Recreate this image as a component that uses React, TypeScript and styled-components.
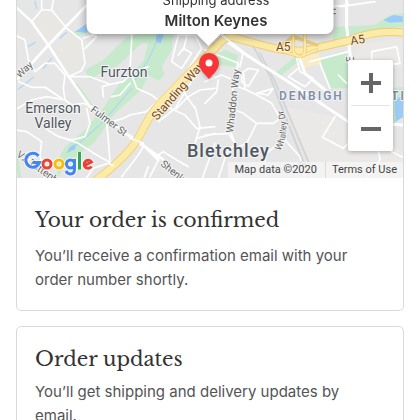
import React from "react";
import styled, { createGlobalStyle } from "styled-components";

const GlobalStyle = createGlobalStyle`
  *, *::before, *::after { box-sizing: border-box; }
  body {
    margin: 0;
    background: #fff;
    color: #545454;
    font-family: Inter, "Liberation Sans", sans-serif;
    font-size: 15px;
    line-height: 24px;
  }
`;

const Page = styled.main`
  display: flex;
  flex-direction: column;
  gap: 15px;
  height: 100vh;
  padding: 0 16px;
  overflow: hidden;
`;

const Card = styled.section<{ $continued?: boolean }>`
  flex: none;
  border: 1px solid #d9d9d9;
  border-width: ${(p) => (p.$continued ? "0 1px 1px" : "1px")};
  border-radius: ${(p) => (p.$continued ? "0 0 5px 5px" : "5px")};
  overflow: hidden;
`;

const CardBody = styled.div<{ $roomy?: boolean }>`
  display: flex;
  flex-direction: column;
  gap: ${(p) => (p.$roomy ? "8px" : "5px")};
  padding: ${(p) => (p.$roomy ? "26px 18px 18px" : "16px 18px 18px")};
`;

const Heading = styled.h2`
  margin: 0;
  color: #333;
  font: 400 20px/32px "Libre Baskerville", "Liberation Serif", serif;
`;

const Text = styled.p`
  margin: 0;
`;

const MapFrame = styled.div`
  position: relative;
  height: 178px;
  overflow: hidden;
  background: #e5e5e5;
  font-family: Roboto, sans-serif;
`;

const MapDrawing = styled.svg`
  display: block;
  width: 100%;
  height: 100%;
`;

const Popup = styled.div`
  position: absolute;
  bottom: 144px;
  left: 50%;
  width: 247px;
  padding: 8px 12px 2px 24px;
  transform: translateX(-50%);
  border-radius: 8px;
  background: #fff;
  color: #333;
  text-align: center;
  font-family: Inter, sans-serif;
  filter: drop-shadow(0 2px 4px rgba(0, 0, 0, 0.4));

  &::after {
    content: "";
    position: absolute;
    top: 100%;
    left: calc(50% - 14px);
    border: 12px solid transparent;
    border-top-color: #fff;
    border-bottom-width: 0;
  }
`;

const PopupLabel = styled.div`
  font-size: 13px;
  line-height: 20px;
`;

const PopupPlace = styled.div`
  font-size: 15px;
  font-weight: 600;
  line-height: 22px;
`;

const Pin = styled.svg`
  position: absolute;
  top: 49px;
  left: calc(50% - 16px);
  width: 32px;
  height: 36px;
`;

const ZoomControl = styled.div`
  position: absolute;
  top: 60px;
  right: 10px;
  display: flex;
  flex-direction: column;
  width: 45px;
  padding: 0 3px;
  border-radius: 2px;
  background: #fff;
  box-shadow: 0 1px 4px rgba(0, 0, 0, 0.3);
`;

const ZoomButton = styled.button`
  display: grid;
  place-items: center;
  height: 45px;
  padding: 0;
  border: 0;
  background: none;
  color: #666;
  cursor: pointer;

  & + & {
    height: 46px;
    border-top: 1px solid #e6e6e6;
  }
`;

const Attribution = styled.div`
  position: absolute;
  right: 0;
  bottom: 0;
  display: flex;
  background: rgba(245, 245, 245, 0.8);
  color: #444;
  font-size: 11px;
  line-height: 16px;
`;

const Notice = styled.span`
  padding: 0 8px 0 7px;
`;

const TermsLink = styled.a`
  padding: 0 6px;
  border-left: 1px solid #dcdcdc;
  color: inherit;
  text-decoration: none;
`;

const Logo = styled.a`
  position: absolute;
  bottom: 0;
  left: 6px;
  display: block;
  width: 74px;
  height: 30px;
`;

function StreetMap() {
  return (
    <MapDrawing viewBox="17 0 386 178" preserveAspectRatio="xMidYMid slice" role="img" aria-label="Map of Bletchley">
      <path fill="#e6e6e6" d="M17 0h386v178H17z" />
      {/* West side, drawn at three units to the pixel */}
      <g transform="translate(15 0) scale(.33333)" fill="none" strokeLinejoin="round" strokeLinecap="round">
        <path fill="#e9e7e4" d="M50 65 80 30H110L155 85 100 135Z M115 145 155 92 195 120 210 190 160 225Z" />
        <path fill="#c6eacb" d="M165 100 215 78V102L185 108ZM210 210 265 180 335 112 375 100H475L470 150 440 200 448 225 430 242 400 225 380 268 300 340 240 425 150 495 128 535 125 490 150 440 210 390 265 325 310 255 385 185 400 130 380 130 310 195 255 220 225 240Z" />
        <path stroke="#c6eacb" strokeWidth="10" d="M5 20 45 62M185 255 230 320M0 440 15 540" />
        <path fill="#9bccf9" d="M180 95 217 70V98ZM425 103H447L437 130 422 125ZM165 440 185 430 180 447 155 460Z" />
        <g stroke="#b6d6f0" strokeWidth="4">
          <path d="M40 140 60 127M10 268 55 232M85 205 110 175M135 115 155 97M60 5 65 25M350 265 260 370 180 440M425 125 400 180 360 240" />
        </g>
        <g stroke="#fff" strokeWidth="5">
          <path d="M0 105 30 120 40 180 60 215 90 190 120 190 150 225 145 265 150 300 170 315 205 310 232 320M0 240 50 262 92 262 140 295" />
          <path d="M50 65 80 30H110L155 85 200 120 210 190 198 213 160 230M115 0 110 30M80 0V30M205 115 235 105 245 110 210 145" />
          <path d="M160 230 225 230 285 253 325 245 350 220 370 210 400 200M350 0V120L345 210 365 265 410 285 435 305M265 290 262 260 285 253M290 290 315 285 345 250" />
          <path d="M140 295 90 262M0 330 50 300 95 290 150 300M95 388 130 410 170 420 210 410 225 370 215 325M120 405 190 430 245 465 290 490" />
          <path d="M5 390 35 395 80 425 75 465 90 540M75 465 40 480M285 485 280 420 275 370 325 355 345 345 395 335 430 300 515 215 560 145 540 105H490L470 185 500 205 530 160 505 145 490 165M515 110 505 150" />
          <path d="M430 365 450 350 480 325 545 220 560 205 600 230M435 300 465 325 510 345 545 385 600 380M480 330 520 290 555 270 600 265M540 320 555 380 540 430M505 275 540 325M545 415 600 400M365 425 385 440 370 465 320 530M420 470 445 455 485 480 520 500M430 480 405 530M560 540 600 430M385 540 400 500" />
        </g>
        <g stroke="#fff" strokeWidth="8">
          <path d="M0 18 50 65 100 135 160 228 225 320 365 423 440 475 505 540M220 10 100 135 0 245M315 390 380 430 430 480" />
        </g>
        <path stroke="#f2d077" strokeWidth="25" d="M230 550Q340 470 375 405 405 342 435 310L600 140" />
        <path stroke="#fceba7" strokeWidth="20" d="M230 550Q340 470 375 405 405 342 435 310L600 140" />
        <path stroke="#fff" strokeWidth="5" d="M210 540 235 505 280 490 295 497M345 415 385 430" />
      </g>
      {/* East side */}
      <g transform="translate(205 0) scale(.33333)" fill="none" strokeLinejoin="round" strokeLinecap="round">
        <path fill="#ebe9e7" d="M240 320 390 350 430 375 520 400 595 460V540H330ZM470 130 590 115 595 205 430 190Z" />
        <path fill="#c6eacb" d="M345 180 425 155 435 265H375ZM390 80 510 75 555 45 595 40V80L490 95 430 120 380 130ZM560 265 595 260V350L565 370ZM60 150 100 165 90 200 40 195 20 170ZM210 220 270 170 285 180 225 230Z" />
        <path fill="#9bccf9" d="M535 60 565 45 595 50V65L555 68ZM570 300 595 285V350L572 365Z" />
        <path fill="#f8ebc5" d="M280 170 340 160 350 190 300 205Z" />
        <path stroke="#d1d3d6" strokeWidth="5" d="M145 140 195 230 300 500M165 160 210 245 325 520M215 285 310 520" />
        <g stroke="#fff" strokeWidth="5">
          <path d="M0 150 100 190 85 250 75 390 90 430 65 460 40 535M0 245 50 225 85 240M85 255 125 270 165 290 200 310 225 355 205 370 155 370 125 430 100 440M115 215 120 265M110 220 130 205 160 210 130 260 110 245ZM155 280 205 265 190 285 160 280M220 430 185 460 175 505M155 370 115 340 90 330M0 310 35 275 40 240M0 405 70 400 90 430M240 420 285 470 300 540M280 205 250 230 300 260 325 235 285 215 275 175" />
          <path d="M315 185 430 155M345 190 375 265M390 350 352 412 415 445 445 415M500 155 575 140 585 190 500 200ZM405 20 510 5M425 250 400 225M370 20 430 15 425 0M520 450 525 480 480 540M560 455 600 475" />
        </g>
        <path stroke="#fff" strokeWidth="9" d="M60 120 120 162 265 255 430 365 600 375M425 0V80L435 160 440 200M280 165 300 220 360 270" />
        <path stroke="#f0cd73" strokeWidth="25" d="M0 175 30 145Q55 108 85 112L170 135Q275 165 340 143L430 122Q510 88 600 98" />
        <path stroke="#fceba7" strokeWidth="19" d="M0 175 30 145Q55 108 85 112L170 135Q275 165 340 143L430 122Q510 88 600 98" />
        <g stroke="#eccb76" strokeWidth="10">
          <path d="M265 90V155Q285 185 300 155V90M235 155 285 170 335 150M230 135 265 110 335 135" />
          <path stroke="#fceba7" strokeWidth="6" d="M265 90V155Q285 185 300 155V90M235 155 285 170 335 150" />
        </g>
        <path stroke="#fff" strokeWidth="5" d="M50 105 115 155 105 200" />
      </g>

      <path id="whalley" fill="none" d="M280 151C288 138 289 122 279 98" />
      <g fontFamily="Roboto" fill="#505761" stroke="#f4f4f4" strokeWidth="2" paintOrder="stroke" strokeLinejoin="round">
        <g fontSize="14" textAnchor="middle">
          <text x="124" y="77">Furzton</text>
          <text x="53" y="113">Emerson</text>
          <text x="53" y="128">Valley</text>
        </g>
        <text x="187" y="157" fontSize="18" fontWeight="500" letterSpacing="1">Bletchley</text>
        <g fontSize="12" fontWeight="600" fill="#7f8ea9" letterSpacing="2">
          <text x="279" y="100">DENBIGH</text>
          <text x="391" y="100">TH</text>
        </g>
        <g fontSize="10" fill="#656565">
          <text transform="translate(90 111) rotate(37)">Fulmer St</text>
          <text transform="translate(16 82) rotate(-43)">. Way</text>
          <text transform="translate(160 165) rotate(39)">Shenley</text>
          <text transform="translate(16 156) rotate(35)">V2 Tattenhoe</text>
          <text transform="translate(233 133) rotate(-84)">Whaddon Way</text>
          <text fontSize="9"><textPath href="#whalley">Whalley Dr</textPath></text>
          <text transform="translate(336 15) rotate(-90)">H</text>
          <text transform="translate(354 62) rotate(-90)">E</text>
          <text transform="translate(304 169) rotate(-65)">S</text>
        </g>
        <g fill="#754a24" stroke="#fbf1d0">
          <text transform="translate(157 121) rotate(-49)" fontSize="12">Standing Way</text>
          <text x="276" y="51" fontSize="12">A5</text>
          <text transform="translate(351 45) rotate(-9)" fontSize="12">A5</text>
        </g>
      </g>
    </MapDrawing>
  );
}

function GoogleLogo() {
  return (
    <Logo href="#google" aria-label="Google">
      <svg width="74" height="30" viewBox="0 0 74 30" fill="none">
        {["#fff", ""].map((outline) => (
          <g key={outline || "colour"} strokeWidth={outline ? 5 : 3} opacity={outline ? 0.75 : 1}>
            <path stroke={outline || "#4285f4"} d="M15.5 8A7 7 0 1 0 16.5 14.5H10" />
            <circle stroke={outline || "#ea4335"} cx="24" cy="16" r="4" />
            <circle stroke={outline || "#fbbc05"} cx="36" cy="16" r="4" />
            <path stroke={outline || "#4285f4"} d="M51.5 11V21Q51.5 26 47.5 26 44.5 26 43 23M51.5 16A4 4 0 1 1 43.5 16 4 4 0 1 1 51.5 16" />
            <path stroke={outline || "#34a853"} d="M56.5 4V21.5" />
            <path stroke={outline || "#ea4335"} d="M61.5 17.5 68.5 14A4 4 0 1 0 68.5 18.5" />
          </g>
        ))}
      </svg>
    </Logo>
  );
}

export default function App() {
  return (
    <>
      <GlobalStyle />
      <Page>
        <Card $continued>
          <MapFrame>
            <StreetMap />
            <Popup>
              <PopupLabel>Shipping address</PopupLabel>
              <PopupPlace>Milton Keynes</PopupPlace>
            </Popup>
            <Pin viewBox="0 0 32 36" aria-hidden="true">
              <defs>
                <filter id="pin-glow" x="-40%" y="-40%" width="180%" height="180%">
                  <feGaussianBlur stdDeviation="2" />
                </filter>
              </defs>
              <path d="M15 31C12 27 6 21 6 14a9.500 9.500 0 0 1 19 0C25 21 18 27 15 31Z" fill="#6b6b6b" opacity=".6" filter="url(#pin-glow)" />
              <path d="M15 30C12 26 5 21 5 14a10 10 0 0 1 20 0C25 21 18 26 15 30Z" fill="#f83437" />
              <circle cx="15" cy="14" r="3.500" fill="#fff" />
            </Pin>
            <GoogleLogo />
            <Attribution>
              <Notice>Map data ©2020</Notice>
              <TermsLink href="#terms">Terms of Use</TermsLink>
            </Attribution>
            <ZoomControl>
              <ZoomButton type="button" aria-label="Zoom in">
                <svg width="20" height="20" viewBox="0 0 20 20" fill="currentColor">
                  <path d="M8 0h4v8h8v4h-8v8H8v-8H0V8h8z" />
                </svg>
              </ZoomButton>
              <ZoomButton type="button" aria-label="Zoom out">
                <svg width="20" height="4" viewBox="0 0 20 4" fill="currentColor">
                  <path d="M0 0h20v4H0z" />
                </svg>
              </ZoomButton>
            </ZoomControl>
          </MapFrame>
          <CardBody $roomy>
            <Heading>Your order is confirmed</Heading>
            <Text>You’ll receive a confirmation email with your order number shortly.</Text>
          </CardBody>
        </Card>
        <Card>
          <CardBody>
            <Heading>Order updates</Heading>
            <Text>You’ll get shipping and delivery updates by email.</Text>
          </CardBody>
        </Card>
      </Page>
    </>
  );
}
